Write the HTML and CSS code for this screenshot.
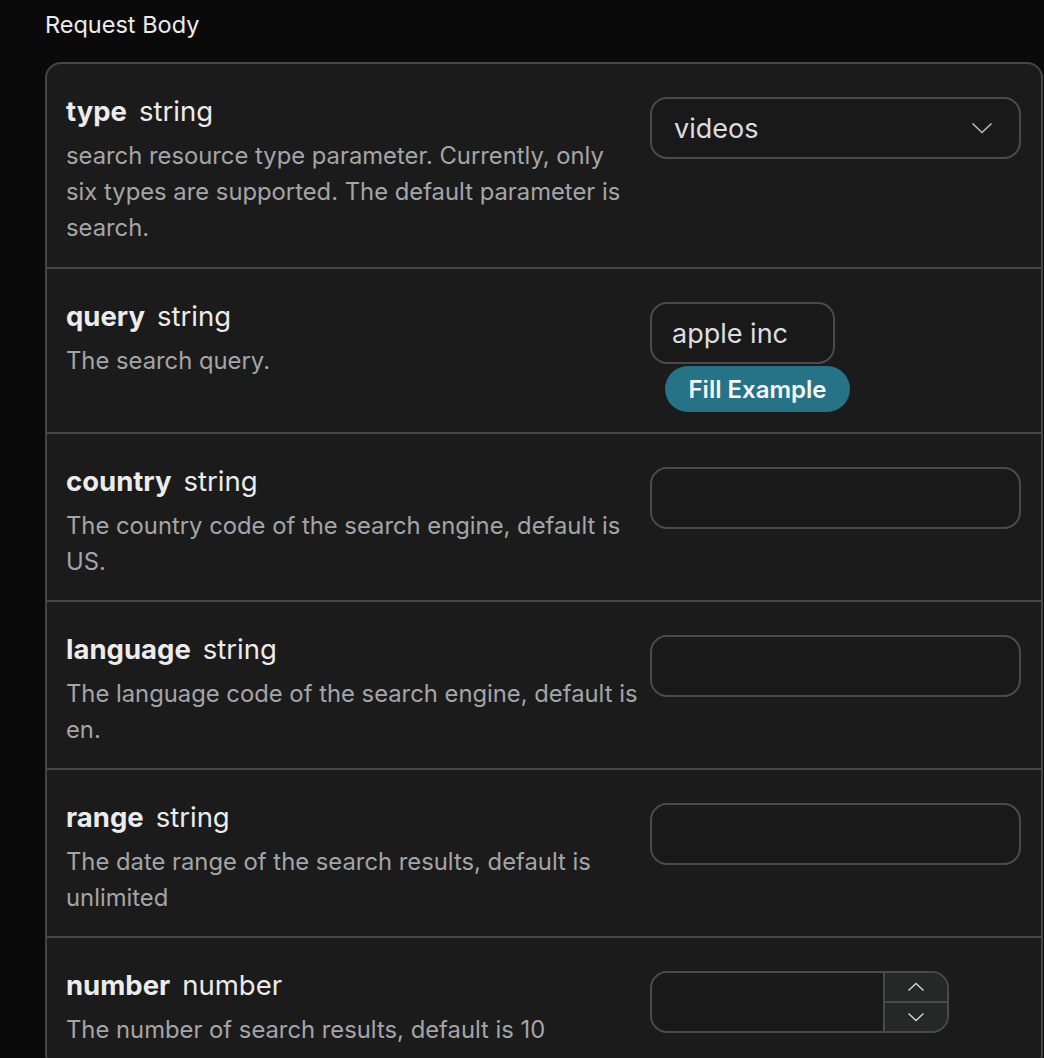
FILE: index.html
```html
<!DOCTYPE html>
<html>
<head>
<meta charset="utf-8">
<link rel="stylesheet" href="styles.css">
</head>
<body>
<div class="page">
  <div class="heading">Request Body</div>
  <div class="card">
    <div class="row">
      <div class="info">
        <div class="title"><b>type</b><span>string</span></div>
        <div class="desc">search resource type parameter. Currently, only six types are supported. The default parameter is search.</div>
      </div>
      <div class="control">
        <div class="select">
          <span>videos</span>
          <svg width="22" height="12" viewBox="0 0 22 12"><path d="M1.5 1.5 L11 10.5 L20.5 1.5" fill="none" stroke="#b9bbc0" stroke-width="1.6"/></svg>
        </div>
      </div>
    </div>
    <div class="row">
      <div class="info">
        <div class="title"><b>query</b><span>string</span></div>
        <div class="desc">The search query.</div>
      </div>
      <div class="control">
        <div class="input short">apple inc</div>
        <button class="fill">Fill Example</button>
      </div>
    </div>
    <div class="row">
      <div class="info">
        <div class="title"><b>country</b><span>string</span></div>
        <div class="desc">The country code of the search engine, default is US.</div>
      </div>
      <div class="control">
        <div class="input"></div>
      </div>
    </div>
    <div class="row">
      <div class="info">
        <div class="title"><b>language</b><span>string</span></div>
        <div class="desc">The language code of the search engine, default is en.</div>
      </div>
      <div class="control">
        <div class="input"></div>
      </div>
    </div>
    <div class="row">
      <div class="info">
        <div class="title"><b>range</b><span>string</span></div>
        <div class="desc">The date range of the search results, default is unlimited</div>
      </div>
      <div class="control">
        <div class="input"></div>
      </div>
    </div>
    <div class="row">
      <div class="info">
        <div class="title"><b>number</b><span>number</span></div>
        <div class="desc">The number of search results, default is 10</div>
      </div>
      <div class="control">
        <div class="number">
          <div class="num-field"></div>
          <div class="spin">
            <div class="spin-btn"><svg width="18" height="10" viewBox="0 0 18 10"><path d="M1.5 8.5 L9 1.5 L16.5 8.5" fill="none" stroke="#d0d2d6" stroke-width="1.4"/></svg></div>
            <div class="spin-btn down"><svg width="18" height="10" viewBox="0 0 18 10"><path d="M1.5 1.5 L9 8.5 L16.5 1.5" fill="none" stroke="#d0d2d6" stroke-width="1.4"/></svg></div>
          </div>
        </div>
      </div>
    </div>
  </div>
</div>
</body>
</html>
```
FILE: styles.css
```css
html, body {
  margin: 0;
  padding: 0;
  background: #0a0a0a;
  font-family: Inter, "Noto Sans", "Liberation Sans", sans-serif;
  overflow: hidden;
}
.page {
  padding-left: 45px;
  height: 1058px;
}
.heading {
  height: 50px;
  line-height: 50px;
  font-size: 23.5px;
  color: #ececec;
  margin-bottom: 12px;
}
.card {
  width: 998px;
  box-sizing: border-box;
  background: #1b1b1b;
  border: 2px solid #464646;
  border-radius: 16px;
}
.row {
  display: flex;
  justify-content: space-between;
  padding: 29px 20px 20px 19px;
  border-top: 2px solid #464646;
}
.row:first-child {
  border-top: none;
  padding-bottom: 21px;
}
.info {
  width: 574px;
}
.title {
  font-size: 27.5px;
  line-height: 36px;
  color: #ececec;
  display: flex;
  gap: 12px;
}
.title b {
  font-weight: 700;
}
.desc {
  margin-top: 9px;
  font-size: 23.8px;
  line-height: 36px;
  color: #a4a5a8;
}
.control {
  width: 371px;
  padding-top: 4px;
}
.select {
  height: 62px;
  box-sizing: border-box;
  border: 2px solid #4a4a4a;
  border-radius: 17px;
  display: flex;
  align-items: center;
  justify-content: space-between;
  padding: 0 26px 0 22px;
  font-size: 27px;
  color: #dcdde1;
  background: #191919;
}
.input {
  height: 62px;
  box-sizing: border-box;
  border: 2px solid #4a4a4a;
  border-radius: 17px;
  background: #191919;
  display: flex;
  align-items: center;
  padding-left: 20px;
  font-size: 27px;
  color: #dcdde1;
}
.input.short {
  width: 185px;
}
.fill {
  display: block;
  margin: 2px 0 0 15px;
  width: 185px;
  height: 46px;
  border: none;
  border-radius: 23px;
  background: #267387;
  color: #f4f6f8;
  font-family: inherit;
  font-size: 24px;
  font-weight: 600;
  padding: 0;
}
.number {
  width: 299px;
  height: 62px;
  box-sizing: border-box;
  border: 2px solid #4a4a4a;
  border-radius: 17px;
  background: #191919;
  display: flex;
  overflow: hidden;
}
.num-field {
  flex: 1;
}
.spin {
  width: 62px;
  border-left: 2px solid #4a4a4a;
  display: flex;
  flex-direction: column;
  background: #262828;
}
.spin-btn {
  flex: 1;
  display: flex;
  align-items: center;
  justify-content: center;
}
.spin-btn.down {
  border-top: 2px solid #4a4a4a;
}
```
